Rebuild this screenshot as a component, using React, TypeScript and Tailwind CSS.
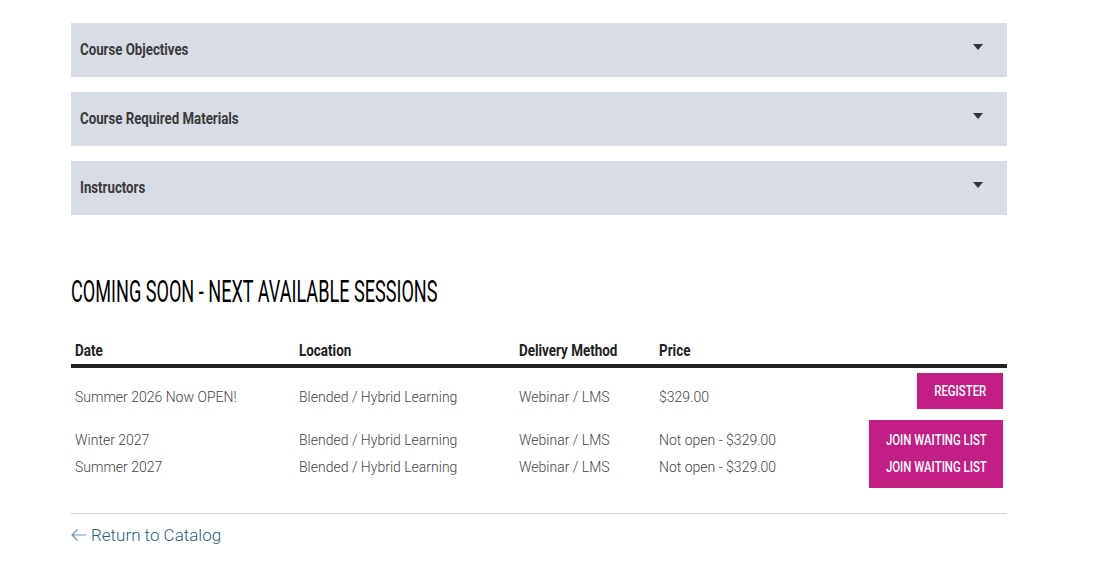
import React, { useState } from "react";

const sections = ["Course Objectives", "Course Required Materials", "Instructors"];

function Caret() {
  return (
    <svg width="10" height="6" viewBox="0 0 10 6" className="text-[#333] mb-[7px]">
      <path d="M0 0h10L5 6z" fill="currentColor" />
    </svg>
  );
}

function Cell({ children, className = "" }: { children: React.ReactNode; className?: string }) {
  return <div className={`text-[14px] leading-[20px] font-light text-[#444] ${className}`}>{children}</div>;
}

function PinkButton({ label, className = "" }: { label: string; className?: string }) {
  return (
    <button className={`bg-[#c21e83] text-white flex justify-center ${className}`}>
      <span className="inline-block text-[15px] leading-[16px] font-medium scale-x-[0.76] whitespace-nowrap">
        {label}
      </span>
    </button>
  );
}

export default function App() {
  const [open, setOpen] = useState<string | null>(null);
  const cols = "grid grid-cols-[224px_220px_140px_1fr_auto] pl-[4px] pr-[4px]";

  return (
    <div className="min-h-[571px] bg-white font-['Roboto',sans-serif]">
      <div className="w-[936px] ml-[71px] pt-[23px]">
        <div className="flex flex-col gap-[15px]">
          {sections.map((s) => (
            <button
              key={s}
              onClick={() => setOpen(open === s ? null : s)}
              className="h-[54px] bg-[#d8dce5] flex items-center justify-between pl-[9px] pr-[24px] text-left"
            >
              <span className="inline-block origin-left scale-x-[0.78] text-[17px] font-bold text-[#3a3a3a] whitespace-nowrap">
                {s}
              </span>
              <Caret />
            </button>
          ))}
        </div>

        <h2 className="mt-[59px] h-[36px] text-[31px] leading-[36px] text-black whitespace-nowrap">
          <span className="inline-block origin-left scale-x-[0.584]">COMING SOON - NEXT AVAILABLE SESSIONS</span>
        </h2>

        <div className={`${cols} mt-[26px] h-[28px] items-center border-b-[4px] border-[#222] box-content`}>
          {["Date", "Location", "Delivery Method", "Price"].map((h) => (
            <div key={h} className="text-[17px] leading-[20px] font-bold text-[#222] whitespace-nowrap">
              <span className="inline-block origin-left scale-x-[0.79]">{h}</span>
            </div>
          ))}
          <div />
        </div>

        <div className={`${cols} h-[41px] items-start`}>
          <Cell className="pt-[19px]">Summer 2026 Now OPEN!</Cell>
          <Cell className="pt-[19px]">Blended / Hybrid Learning</Cell>
          <Cell className="pt-[19px]">Webinar / LMS</Cell>
          <Cell className="pt-[19px]">$329.00</Cell>
          <PinkButton label="REGISTER" className="mt-[5px] w-[86px] h-[36px] items-center" />
        </div>

        <div className={`${cols} h-[45px] items-start`}>
          <Cell className="pt-[21px]">Winter 2027</Cell>
          <Cell className="pt-[21px]">Blended / Hybrid Learning</Cell>
          <Cell className="pt-[21px]">Webinar / LMS</Cell>
          <Cell className="pt-[21px]">Not open - $329.00</Cell>
          <PinkButton label="JOIN WAITING LIST" className="mt-[11px] w-[134px] h-[34px] items-start pt-[12px]" />
        </div>

        <div className={`${cols} h-[34px] items-start`}>
          <Cell className="pt-[3px]">Summer 2027</Cell>
          <Cell className="pt-[3px]">Blended / Hybrid Learning</Cell>
          <Cell className="pt-[3px]">Webinar / LMS</Cell>
          <Cell className="pt-[3px]">Not open - $329.00</Cell>
          <PinkButton label="JOIN WAITING LIST" className="w-[134px] h-[34px] items-start pt-[5px]" />
        </div>

        <div className="mt-[25px] border-t border-[#cfcfcf] pt-[9px]">
          <a href="#" className="inline-flex items-center gap-[5px] text-[17px] leading-[24px] font-light text-[#2b5f7c]">
            <svg width="15" height="12" viewBox="0 0 15 12" fill="none" stroke="#6a95ad" strokeWidth="1.2">
              <path d="M15 6H1M6.5 0.5L1 6l5.5 5.5" />
            </svg>
            Return to Catalog
          </a>
        </div>
      </div>
    </div>
  );
}
